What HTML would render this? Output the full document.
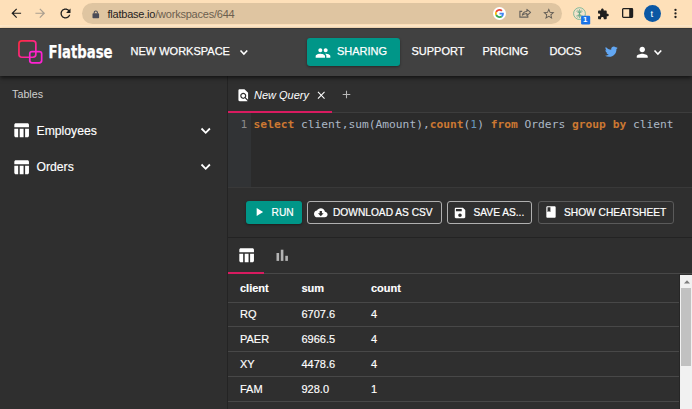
<!DOCTYPE html>
<html>
<head>
<meta charset="utf-8">
<title>Flatbase</title>
<style>
html,body{margin:0;padding:0;}
body{width:692px;height:409px;overflow:hidden;position:relative;background:#303030;font-family:"Liberation Sans",sans-serif;color:#fff;}
.abs{position:absolute;}
svg{position:absolute;overflow:visible;}
#chrome{left:0;top:0;width:692px;height:28px;background:linear-gradient(#fee0b9 0,#fee0b9 24.5px,#ffe8c8 25.5px,#ffe8c8 26.5px,#fee0b9 27px);}
#pill{left:82px;top:3px;width:480px;height:21px;border-radius:10.5px;background:#dfc5a1;}
#url{left:107.5px;top:6.7px;font-size:11px;line-height:15px;color:#26221d;letter-spacing:-0.22px;white-space:nowrap;}
#url span{color:#6d5f4f;}
#header{left:0;top:27.5px;width:692px;height:48.5px;background:#414141;box-shadow:0 1.5px 4px rgba(0,0,0,.6);z-index:5;}
#sidebar{left:0;top:76px;width:228px;height:333px;background:#2f2f2f;}
#vline{left:227.4px;top:76px;width:0.9px;height:333px;background:#242424;z-index:4;}
.t{white-space:nowrap;position:absolute;}
.nav{font-size:11px;line-height:13px;color:#fff;top:45.2px;z-index:7;-webkit-text-stroke:0.25px #fff;}
#brand{left:48.6px;top:40.6px;font-family:"DejaVu Sans Condensed","DejaVu Sans","Liberation Sans",sans-serif;font-size:17.6px;line-height:21px;font-weight:bold;color:#fff;-webkit-text-stroke:0.25px #fff;transform:scaleX(.82);transform-origin:0 0;z-index:7;}
#sharing{left:307px;top:38px;width:92.5px;height:28px;border-radius:3px;background:#009688;z-index:6;box-shadow:0 1px 2.5px rgba(0,0,0,.4);}
.btn{position:absolute;top:201px;height:23px;box-sizing:border-box;border-radius:3px;font-size:10.2px;line-height:12px;color:#fff;white-space:nowrap;-webkit-text-stroke:0.2px #fff;}
.btn .t{top:5.5px;}
.btn.o .t{top:4.5px}
.btn.o{border:1px solid #b0b0b0;}
.hl{position:absolute;left:228px;width:452px;height:1px;background:#484848;}
.c{position:absolute;font-size:11px;line-height:13px;white-space:nowrap;-webkit-text-stroke:0.15px #fff;}
.z{z-index:7}
</style>
</head>
<body>
<!-- browser chrome -->
<div id="chrome" class="abs"></div>
<div id="pill" class="abs"></div>
<div id="url" class="abs">flatbase.io<span>/workspaces/644</span></div>

<!-- header -->
<div id="header" class="abs"></div>
<div class="abs" style="left:0;top:28px;width:692px;height:1px;background:#373737;z-index:6"></div>
<svg class="z" style="left:0;top:28px" width="130" height="48"><text x="48.4" y="29.6" textLength="64.1" lengthAdjust="spacingAndGlyphs" font-family="'DejaVu Sans Condensed','DejaVu Sans','Liberation Sans',sans-serif" font-weight="bold" font-size="17.6" fill="#fff" stroke="#fff" stroke-width="0.25">Flatbase</text></svg>
<div class="t nav" style="left:130.5px">NEW WORKSPACE</div>
<div id="sharing" class="abs"></div>
<div class="t nav" style="left:337px">SHARING</div>
<div class="t nav" style="left:411.5px">SUPPORT</div>
<div class="t nav" style="left:482.5px">PRICING</div>
<div class="t nav" style="left:549.5px">DOCS</div>

<!-- sidebar -->
<div id="sidebar" class="abs"></div>
<div id="vline" class="abs"></div>
<div class="t" style="left:12.1px;top:87.5px;font-size:10.7px;line-height:13px;color:#cfcfcf">Tables</div>
<div class="t" style="left:36.5px;top:123.5px;font-size:12.2px;line-height:15px;-webkit-text-stroke:0.15px #fff">Employees</div>
<div class="t" style="left:36.5px;top:159.5px;font-size:12.2px;line-height:15px;-webkit-text-stroke:0.15px #fff">Orders</div>

<!-- main -->
<div class="abs" style="left:228px;top:75px;width:464px;height:38px;background:#2f2f2f"></div>
<div class="abs" style="left:228px;top:113px;width:464px;height:74px;background:#2b2b2b"></div>
<div class="abs" style="left:228px;top:112.2px;width:464px;height:1.2px;background:#3d3d3d"></div>
<div class="abs" style="left:228px;top:110.7px;width:104px;height:2.3px;background:#d81b60"></div>
<div class="t" style="left:254px;top:88.5px;font-size:11px;line-height:13px;font-style:italic;">New Query</div>
<div class="abs" style="left:228px;top:113.4px;width:22.8px;height:73.4px;background:#313335"></div>
<div class="t" style="left:240.5px;top:118px;font-family:'DejaVu Sans Mono','Liberation Mono',monospace;font-size:11.25px;line-height:14px;color:#8a8a8a">1</div>
<div class="t" id="code" style="left:253.6px;top:118px;font-family:'DejaVu Sans Mono','Liberation Mono',monospace;font-size:11.25px;line-height:14px;color:#abb8c6"><span style="color:#cc7832;font-weight:bold">select</span> client,sum(Amount),<span style="color:#cc7832;font-weight:bold">count</span>(<span style="color:#6897bb">1</span>) <span style="color:#cc7832;font-weight:bold">from</span> Orders <span style="color:#cc7832;font-weight:bold">group</span> <span style="color:#cc7832;font-weight:bold">by</span> client</div>

<!-- toolbar -->
<div class="abs" style="left:228px;top:187px;width:464px;height:50px;background:#2f2f2f;"></div>
<div class="abs" style="left:228px;top:186.9px;width:464px;height:1.6px;background:#393939;"></div>
<div class="btn" style="left:246px;width:55.5px;background:#009688;box-shadow:0 1px 2.5px rgba(0,0,0,.4);"><span class="t" style="left:25.6px">RUN</span></div>
<div class="btn o" style="left:307px;width:134.5px;"><span class="t" style="left:25px;">DOWNLOAD AS CSV</span></div>
<div class="btn o" style="left:447px;width:85px;"><span class="t" style="left:25.5px;">SAVE AS...</span></div>
<div class="btn o" style="left:538px;width:136px;border-color:#5a5a5a"><span class="t" style="left:25px;">SHOW CHEATSHEET</span></div>

<!-- results -->
<div class="abs" style="left:228px;top:237px;width:464px;height:172px;background:#2f2f2f;"></div>
<div class="abs" style="left:228px;top:237px;width:464px;height:1px;background:#232323;"></div>
<div class="hl" style="top:273px;width:464px"></div>
<div class="abs" style="left:228px;top:272px;width:36px;height:1.9px;background:#d81b60"></div>

<div class="c" style="left:240px;top:281.5px;font-weight:bold">client</div>
<div class="c" style="left:301.5px;top:281.5px;font-weight:bold">sum</div>
<div class="c" style="left:371px;top:281.5px;font-weight:bold">count</div>
<div class="hl" style="top:301.5px"></div>
<div class="c" style="left:240px;top:308px">RQ</div><div class="c" style="left:301.5px;top:308px">6707.6</div><div class="c" style="left:371px;top:308px">4</div>
<div class="hl" style="top:326.4px"></div>
<div class="c" style="left:240px;top:333px">PAER</div><div class="c" style="left:301.5px;top:333px">6966.5</div><div class="c" style="left:371px;top:333px">4</div>
<div class="hl" style="top:351.4px"></div>
<div class="c" style="left:240px;top:358px">XY</div><div class="c" style="left:301.5px;top:358px">4478.6</div><div class="c" style="left:371px;top:358px">4</div>
<div class="hl" style="top:376.4px"></div>
<div class="c" style="left:240px;top:383px">FAM</div><div class="c" style="left:301.5px;top:383px">928.0</div><div class="c" style="left:371px;top:383px">1</div>
<div class="hl" style="top:401.4px"></div>

<!-- scrollbar -->
<div class="abs" style="left:679px;top:274px;width:1px;height:135px;background:#262626"></div>
<div class="abs" style="left:680px;top:274.5px;width:12px;height:135px;background:#f1f1f1"></div>
<div class="abs" style="left:681.3px;top:288px;width:9.5px;height:78px;background:#c1c1c1"></div>
<svg style="left:683.5px;top:280px" width="6" height="4" viewBox="0 0 6 4"><path d="M0 3.5 L3 0.3 L6 3.5Z" fill="#7d7d7d"/></svg>
<!-- chrome icons -->
<svg class="z" style="left:9.40px;top:6.05px" width="14.5" height="14.5" viewBox="0 0 24 24"><path d="M20 11H7.83l5.59-5.59L12 4l-8 8 8 8 1.41-1.41L7.83 13H20v-2z" fill="#1f1f1f"/></svg>
<svg class="z" style="left:33.20px;top:6.05px" width="14.5" height="14.5" viewBox="0 0 24 24"><path d="M12 4l-1.41 1.41L16.17 11H4v2h12.17l-5.58 5.59L12 20l8-8z" fill="#aa9f90"/></svg>
<svg class="z" style="left:57.75px;top:5.85px" width="15" height="15" viewBox="0 0 24 24"><path d="M17.65 6.35C16.2 4.9 14.21 4 12 4c-4.42 0-7.99 3.58-7.99 8s3.57 8 7.99 8c3.73 0 6.84-2.55 7.73-6h-2.08c-.82 2.33-3.04 4-5.65 4-3.31 0-6-2.69-6-6s2.69-6 6-6c1.66 0 3.14.69 4.22 1.78L13 11h7V4l-2.35 2.35z" fill="#1f1f1f"/></svg>
<svg class="z" style="left:91.6px;top:9.5px" width="8" height="9" viewBox="0 0 8 9"><rect x="0.5" y="3.3" width="6.6" height="4.9" rx="0.8" fill="#4a4b57"/><path d="M2.2 3.5V2.5a1.6 1.6 0 0 1 3.200 0V3.5" fill="none" stroke="#4a4b57" stroke-width="1.050"/></svg>
<svg class="z" style="left:493.2px;top:7px" width="13" height="13" viewBox="0 0 48 48"><circle cx="24" cy="24" r="24" fill="#fff"/><g transform="translate(7.2 7.2) scale(.7)"><path fill="#EA4335" d="M24 9.5c3.54 0 6.71 1.22 9.21 3.6l6.85-6.85C35.9 2.38 30.47 0 24 0 14.62 0 6.51 5.38 2.56 13.22l7.98 6.19C12.43 13.72 17.74 9.5 24 9.5z"/><path fill="#4285F4" d="M46.98 24.55c0-1.57-.15-3.09-.38-4.55H24v9.020h12.940c-.58 2.960-2.260 5.480-4.780 7.180l7.730 6c4.510-4.180 7.090-10.360 7.090-17.650z"/><path fill="#FBBC05" d="M10.530 28.590c-.48-1.450-.76-2.990-.76-4.590s.27-3.140.76-4.590l-7.980-6.190C.92 16.460 0 20.120 0 24c0 3.880.92 7.540 2.560 10.780l7.970-6.190z"/><path fill="#34A853" d="M24 48c6.480 0 11.930-2.130 15.890-5.810l-7.730-6c-2.150 1.450-4.920 2.300-8.160 2.300-6.260 0-11.570-4.220-13.470-9.910l-7.980 6.190C6.510 42.620 14.620 48 24 48z"/></g></svg>
<svg class="z" style="left:519px;top:7.800px" width="13" height="10" viewBox="0 0 13 10"><path d="M3.2 3.300H0.900V9.100H8.800V7.400" fill="none" stroke="#66625c" stroke-width="1.150"/><path d="M3.300 7.200C3.700 4.700 5.600 3.600 7.900 3.500V1.300L11.600 4.400L7.900 7.500V5.400C6 5.400 4.500 5.900 3.300 7.200Z" fill="none" stroke="#66625c" stroke-width="1.050" stroke-linejoin="round"/></svg>
<svg class="z" style="left:542.15px;top:6.50px" width="13.6" height="13.6" viewBox="0 0 24 24"><path d="M22 9.24l-7.19-.62L12 2 9.19 8.63 2 9.24l5.46 4.73L5.82 21 12 17.27 18.18 21l-1.63-7.03L22 9.24zM12 15.4l-3.76 2.27 1-4.28-3.32-2.88 4.38-.38L12 6.1l1.71 4.04 4.38.38-3.32 2.88 1 4.28L12 15.4z" fill="#5f5a53"/></svg>
<svg class="z" style="left:572.5px;top:6.500px" width="18" height="18" viewBox="0 0 18 18"><circle cx="6.500" cy="6.600" r="5.900" fill="#f1e4cc" stroke="#74b394" stroke-width="0.900"/><path d="M6.500 2.200V11.200M3.400 4.200C5 5.900 8 5.900 9.600 4.200M3.200 9.200C5 7.600 8 7.600 9.800 9.200M4.600 2.800L8.400 10.600M8.400 2.800L4.600 10.600" stroke="#5da582" stroke-width="0.700" fill="none"/><rect x="8.100" y="8.800" width="9.100" height="8.700" rx="1.200" fill="#1a73e8"/></svg>
<div class="t z" style="left:583.1px;top:15.9px;font-size:7.8px;line-height:8px;font-weight:bold;color:#fff">1</div>
<svg class="z" style="left:596.84px;top:7.86px" width="12.3" height="12.3" viewBox="0 0 24 24"><path d="M20.5 11H19V7c0-1.1-.9-2-2-2h-4V3.5C13 2.12 11.88 1 10.5 1S8 2.12 8 3.5V5H4c-1.1 0-1.99.9-1.99 2v3.8H3.5c1.49 0 2.7 1.21 2.7 2.7s-1.21 2.7-2.7 2.7H2V20c0 1.1.9 2 2 2h3.8v-1.5c0-1.49 1.21-2.7 2.7-2.7 1.49 0 2.7 1.21 2.7 2.7V22H17c1.1 0 2-.9 2-2v-4h1.5c1.38 0 2.5-1.12 2.5-2.5S21.88 11 20.5 11z" fill="#1f1f1f"/></svg>
<svg class="z" style="left:621.7px;top:8.4px" width="11.2" height="10" viewBox="0 0 11.2 10"><rect x="0.65" y="0.65" width="9.900" height="8.700" rx="0.800" fill="none" stroke="#1f1f1f" stroke-width="1.300"/><rect x="7.200" y="0.650" width="3.400" height="8.700" fill="#1f1f1f"/></svg>
<div class="abs z" style="left:643.7px;top:5.2px;width:17px;height:17px;border-radius:50%;background:#0b57a4"></div>
<div class="t z" style="left:650.6px;top:7.4px;font-size:9.5px;line-height:13px;color:#fff">t</div>
<svg class="z" style="left:674.3px;top:8px" width="3" height="11" viewBox="0 0 3 11"><circle cx="1.500" cy="1.900" r="1.150" fill="#1f1f1f"/><circle cx="1.500" cy="5.450" r="1.150" fill="#1f1f1f"/><circle cx="1.500" cy="9.000" r="1.150" fill="#1f1f1f"/></svg>
<!-- header icons -->
<svg class="z" style="left:17px;top:39px" width="27" height="26" viewBox="0 0 27 26"><defs><linearGradient id="lg" x1="0" y1="0" x2="1" y2="1"><stop offset="0" stop-color="#ff2a3c"/><stop offset="1" stop-color="#ff22c8"/></linearGradient></defs><rect x="1.95" y="1.85" width="16.9" height="16.4" rx="2.9" fill="none" stroke="url(#lg)" stroke-width="1.7"/><rect x="12.75" y="12.55" width="11.9" height="11.3" rx="2.3" fill="none" stroke="#ff22d2" stroke-width="1.7"/></svg>
<svg class="z" style="left:238.77px;top:48.70px" width="9.76" height="7.00" viewBox="0 0 9.76 7.00"><path d="M1.5 1.5L4.88 5.00L8.26 1.5" fill="none" stroke="#fff" stroke-width="1.6"/></svg>
<svg class="z" style="left:315.40px;top:44.90px" width="16" height="16" viewBox="0 0 24 24"><path d="M16 11c1.66 0 2.99-1.34 2.99-3S17.66 5 16 5c-1.66 0-3 1.34-3 3s1.34 3 3 3zm-8 0c1.66 0 2.99-1.34 2.99-3S9.660 5 8 5C6.34 5 5 6.34 5 8s1.34 3 3 3zm0 2c-2.33 0-7 1.17-7 3.5V19h14v-2.5c0-2.33-4.67-3.5-7-3.5zm8 0c-.29 0-.62.02-.97.05 1.16.84 1.97 1.97 1.97 3.45V19h6v-2.5c0-2.33-4.67-3.5-7-3.5z" fill="#fff"/></svg>
<svg class="z" style="left:603.98px;top:44.04px" width="14.7" height="14.7" viewBox="0 0 24 24"><path d="M22.46 6c-.77.35-1.6.58-2.46.69.88-.53 1.56-1.37 1.88-2.38-.83.5-1.75.85-2.72 1.05C18.37 4.5 17.26 4 16 4c-2.35 0-4.27 1.92-4.27 4.29 0 .34.04.67.11.98C8.28 9.09 5.11 7.38 3 4.79c-.37.63-.58 1.37-.58 2.15 0 1.49.75 2.81 1.91 3.56-.71 0-1.37-.2-1.95-.5v.03c0 2.08 1.48 3.82 3.44 4.21a4.22 4.22 0 0 1-1.93.07 4.28 4.28 0 0 0 4 2.98 8.521 8.521 0 0 1-5.33 1.84c-.34 0-.68-.02-1.02-.06C3.44 20.29 5.7 21 8.12 21 16 21 20.33 14.46 20.33 8.79c0-.19 0-.37-.01-.56.84-.6 1.56-1.36 2.14-2.23z" fill="#62a7f3"/></svg>
<svg class="z" style="left:634.35px;top:43.80px" width="16.5" height="16.5" viewBox="0 0 24 24"><path d="M12 12c2.21 0 4-1.79 4-4s-1.79-4-4-4-4 1.79-4 4 1.79 4 4 4zm0 2c-2.67 0-8 1.34-8 4v2h16v-2c0-2.66-5.33-4-8-4z" fill="#fff"/></svg>
<svg class="z" style="left:652.87px;top:48.80px" width="9.76" height="7.00" viewBox="0 0 9.76 7.00"><path d="M1.5 1.5L4.88 5.00L8.26 1.5" fill="none" stroke="#fff" stroke-width="1.6"/></svg>
<!-- sidebar icons -->
<svg class="z" style="left:11.91px;top:121.40px" width="18.5" height="18.5" viewBox="0 0 24 24"><path d="M10 10.02h5V21h-5zM17 21h3c1.1 0 2-.9 2-2v-9h-5v11zm3-18H5c-1.1 0-2 .9-2 2v3h19V5c0-1.1-.9-2-2-2zM3 19c0 1.1.9 2 2 2h3V10H3v9z" fill="#fff"/></svg>
<svg class="z" style="left:11.91px;top:157.60px" width="18.5" height="18.5" viewBox="0 0 24 24"><path d="M10 10.02h5V21h-5zM17 21h3c1.1 0 2-.9 2-2v-9h-5v11zm3-18H5c-1.1 0-2 .9-2 2v3h19V5c0-1.1-.9-2-2-2zM3 19c0 1.1.9 2 2 2h3V10H3v9z" fill="#fff"/></svg>
<svg class="z" style="left:200.08px;top:126.90px" width="11.40" height="7.80" viewBox="0 0 11.40 7.80"><path d="M1.5 1.5L5.70 5.80L9.90 1.5" fill="none" stroke="#fff" stroke-width="1.8"/></svg>
<svg class="z" style="left:200.08px;top:163.20px" width="11.40" height="7.80" viewBox="0 0 11.40 7.80"><path d="M1.5 1.5L5.70 5.80L9.90 1.5" fill="none" stroke="#fff" stroke-width="1.8"/></svg>
<!-- tab icons -->
<svg class="z" style="left:236.40px;top:87.75px" width="14.5" height="14.5" viewBox="0 0 24 24"><path d="M20 19.59V8l-6-6H6c-1.1 0-1.99.9-1.99 2L4 20c0 1.1.89 2 1.99 2H18c.45 0 .85-.15 1.19-.4l-4.43-4.43c-.8.52-1.74.83-2.76.83-2.76 0-5-2.24-5-5s2.24-5 5-5 5 2.24 5 5c0 1.02-.31 1.96-.83 2.75L20 19.59zM9 13c0 1.66 1.34 3 3 3s3-1.34 3-3-1.34-3-3-3-3 1.34-3 3z" fill="#fff"/></svg>
<svg class="z" style="left:314.55px;top:89.3px" width="12.5" height="12.5" viewBox="0 0 24 24"><path d="M19 6.41L17.59 5 12 10.59 6.41 5 5 6.41 10.59 12 5 17.59 6.41 19 12 13.41 17.59 19 19 17.59 13.41 12z" fill="#fff"/></svg>
<svg class="z" style="left:340.30px;top:88.15px" width="13" height="13" viewBox="0 0 24 24"><path d="M19 13h-6v6h-2v-6H5v-2h6V5h2v6h6v2z" fill="#b8b8b8"/></svg>
<!-- button icons -->
<svg class="z" style="left:251.52px;top:205.30px" width="14" height="14" viewBox="0 0 24 24"><path d="M8 5v14l11-7z" fill="#fff"/></svg>
<svg class="z" style="left:313.80px;top:205.70px" width="13.6" height="13.6" viewBox="0 0 24 24"><path d="M19.35 10.04C18.67 6.59 15.64 4 12 4 9.11 4 6.6 5.64 5.35 8.04 2.34 8.36 0 10.91 0 14c0 3.31 2.69 6 6 6h13c2.76 0 5-2.24 5-5 0-2.64-2.05-4.78-4.65-4.96zM17 13l-5 5-5-5h3V9h4v4h3z" fill="#fff"/></svg>
<svg class="z" style="left:453.05px;top:205.55px" width="14" height="14" viewBox="0 0 24 24"><path d="M17 3H5c-1.11 0-2 .9-2 2v14c0 1.1.89 2 2 2h14c1.1 0 2-.9 2-2V7l-4-4zm-5 16c-1.66 0-3-1.34-3-3s1.34-3 3-3 3 1.34 3 3-1.34 3-3 3zm3-10H5V5h10v4z" fill="#fff"/></svg>
<svg class="z" style="left:543.85px;top:205.35px" width="14" height="14" viewBox="0 0 24 24"><path d="M18 2H6c-1.1 0-2 .9-2 2v16c0 1.1.9 2 2 2h12c1.1 0 2-.9 2-2V4c0-1.1-.9-2-2-2zM6 4h5v8l-2.5-1.5L6 12V4z" fill="#fff"/></svg>
<!-- result tab icons -->
<svg class="z" style="left:236.71px;top:246.10px" width="18.5" height="18.5" viewBox="0 0 24 24"><path d="M10 10.02h5V21h-5zM17 21h3c1.1 0 2-.9 2-2v-9h-5v11zm3-18H5c-1.1 0-2 .9-2 2v3h19V5c0-1.1-.9-2-2-2zM3 19c0 1.1.9 2 2 2h3V10H3v9z" fill="#fff"/></svg>
<svg class="z" style="left:276px;top:249px" width="13" height="12" viewBox="0 0 13 12"><rect x="0.500" y="4" width="2.600" height="7.900" fill="#b4b4b4"/><rect x="4.800" y="0.700" width="2.600" height="11.200" fill="#b4b4b4"/><rect x="9.300" y="6.800" width="2.600" height="5.100" fill="#b4b4b4"/></svg>
</body>
</html>
